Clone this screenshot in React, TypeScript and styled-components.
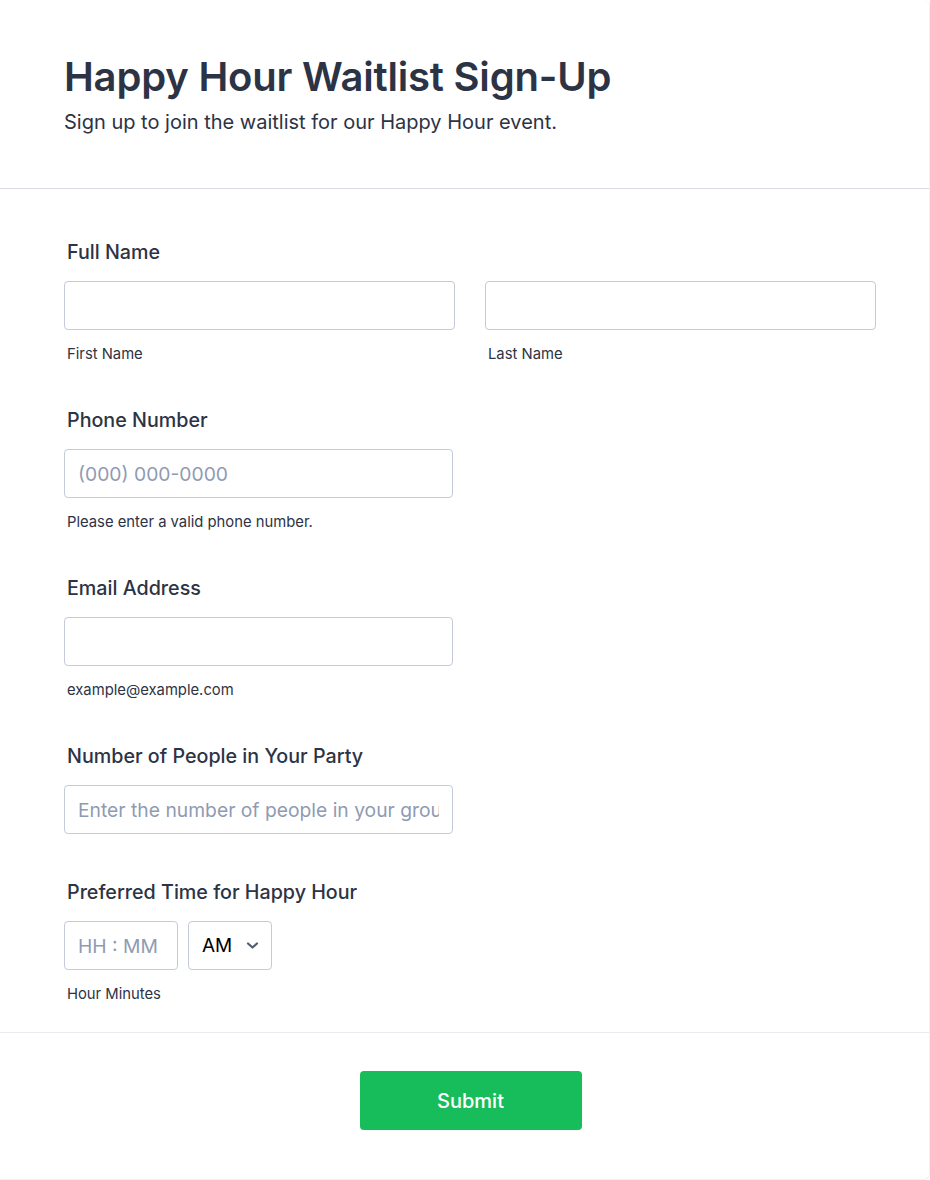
import React from "react";
import styled, { createGlobalStyle } from "styled-components";

const Global = createGlobalStyle`
  html, body { margin: 0; padding: 0; background: #ffffff; }
  * { box-sizing: border-box; }
  body { font-family: Inter, "Noto Sans", sans-serif; color: #2c3345; }
`;

const Card = styled.div`
  width: 930px;
  min-height: 1179px;
  background: #ffffff;
  border: 1px solid #f0f1f4;
  border-top: none;
  border-left: none;
  border-radius: 0 6px 6px 0;
`;

const Header = styled.header`
  padding: 53px 64px 52px;
  border-bottom: 1px solid #d8dae8;
`;

const Title = styled.h1`
  margin: 0;
  font-size: 40px;
  line-height: 48px;
  font-weight: 600;
  color: #2c3345;
  letter-spacing: -0.2px;
`;

const Subtitle = styled.p`
  margin: 7px 0 0;
  font-size: 20px;
  line-height: 28px;
  font-weight: 400;
  color: #2c3345;
`;

const Body = styled.div`
  padding: 48px 50px 28px 64px;
  display: flex;
  flex-direction: column;
  gap: 41px;
`;

const Field = styled.div<{ $tail?: number }>`
  display: flex;
  flex-direction: column;
  padding-bottom: ${(p) => p.$tail ?? 0}px;
`;

const Label = styled.div`
  font-size: 19.7px;
  line-height: 30px;
  font-weight: 500;
  color: #2c3345;
  padding-left: 3px;
  margin-bottom: 14px;
`;

const Row = styled.div`
  display: flex;
  gap: 30px;
`;

const Col = styled.div<{ $w?: number }>`
  display: flex;
  flex-direction: column;
  width: ${(p) => (p.$w ? `${p.$w}px` : "auto")};
  flex-shrink: 0;
`;

const Input = styled.input<{ $w?: number }>`
  width: ${(p) => (p.$w ? `${p.$w}px` : "100%")};
  height: 49px;
  border: 1px solid #c3cad8;
  border-radius: 4px;
  padding: 0 13px;
  font-family: Inter, "Noto Sans", sans-serif;
  font-size: 19.3px;
  color: #2c3345;
  background: #fff;
  outline: none;
  &::placeholder { color: #8f9bb3; opacity: 1; }
`;

const Sub = styled.div`
  font-size: 14.8px;
  line-height: 20px;
  color: #2c3345;
  padding-left: 3px;
  margin-top: 14px;
`;

const Select = styled.div`
  width: 84px;
  height: 49px;
  border: 1px solid #c3cad8;
  border-radius: 4px;
  display: flex;
  align-items: center;
  padding: 0 12px 0 13px;
  justify-content: space-between;
  font-size: 19px;
  color: #000;
`;

const TimeRow = styled.div`
  display: flex;
  gap: 10px;
`;

const Footer = styled.div`
  border-top: 1px solid #eaebf0;
  padding: 38px 0 49px 12px;
  display: flex;
  justify-content: center;
`;

const Button = styled.button`
  width: 222px;
  height: 59px;
  border: none;
  border-radius: 4px;
  background: #18bd5b;
  color: #fff;
  font-family: Inter, "Noto Sans", sans-serif;
  font-size: 20px;
  font-weight: 500;
`;

const Chevron = () => (
  <svg width="13" height="9" viewBox="0 0 13 9">
    <path d="M2 2.5 L6.5 6.5 L11 2.5" fill="none" stroke="#545d6e" strokeWidth="2.2" strokeLinecap="round" strokeLinejoin="round" />
  </svg>
);

export default function App() {
  return (
    <>
      <Global />
      <Card>
        <Header>
          <Title>Happy Hour Waitlist Sign-Up</Title>
          <Subtitle>Sign up to join the waitlist for our Happy Hour event.</Subtitle>
        </Header>
        <Body>
          <Field>
            <Label>Full Name</Label>
            <Row>
              <Col $w={391}>
                <Input />
                <Sub>First Name</Sub>
              </Col>
              <Col $w={391}>
                <Input />
                <Sub>Last Name</Sub>
              </Col>
            </Row>
          </Field>
          <Field>
            <Label>Phone Number</Label>
            <Input $w={389} placeholder="(000) 000-0000" />
            <Sub>Please enter a valid phone number.</Sub>
          </Field>
          <Field>
            <Label>Email Address</Label>
            <Input $w={389} />
            <Sub>example@example.com</Sub>
          </Field>
          <Field $tail={2}>
            <Label>Number of People in Your Party</Label>
            <Input $w={389} placeholder="Enter the number of people in your group" />
          </Field>
          <Field>
            <Label>Preferred Time for Happy Hour</Label>
            <TimeRow>
              <Input $w={114} placeholder="HH : MM" />
              <Select>
                <span>AM</span>
                <Chevron />
              </Select>
            </TimeRow>
            <Sub>Hour Minutes</Sub>
          </Field>
        </Body>
        <Footer>
          <Button>Submit</Button>
        </Footer>
      </Card>
    </>
  );
}
